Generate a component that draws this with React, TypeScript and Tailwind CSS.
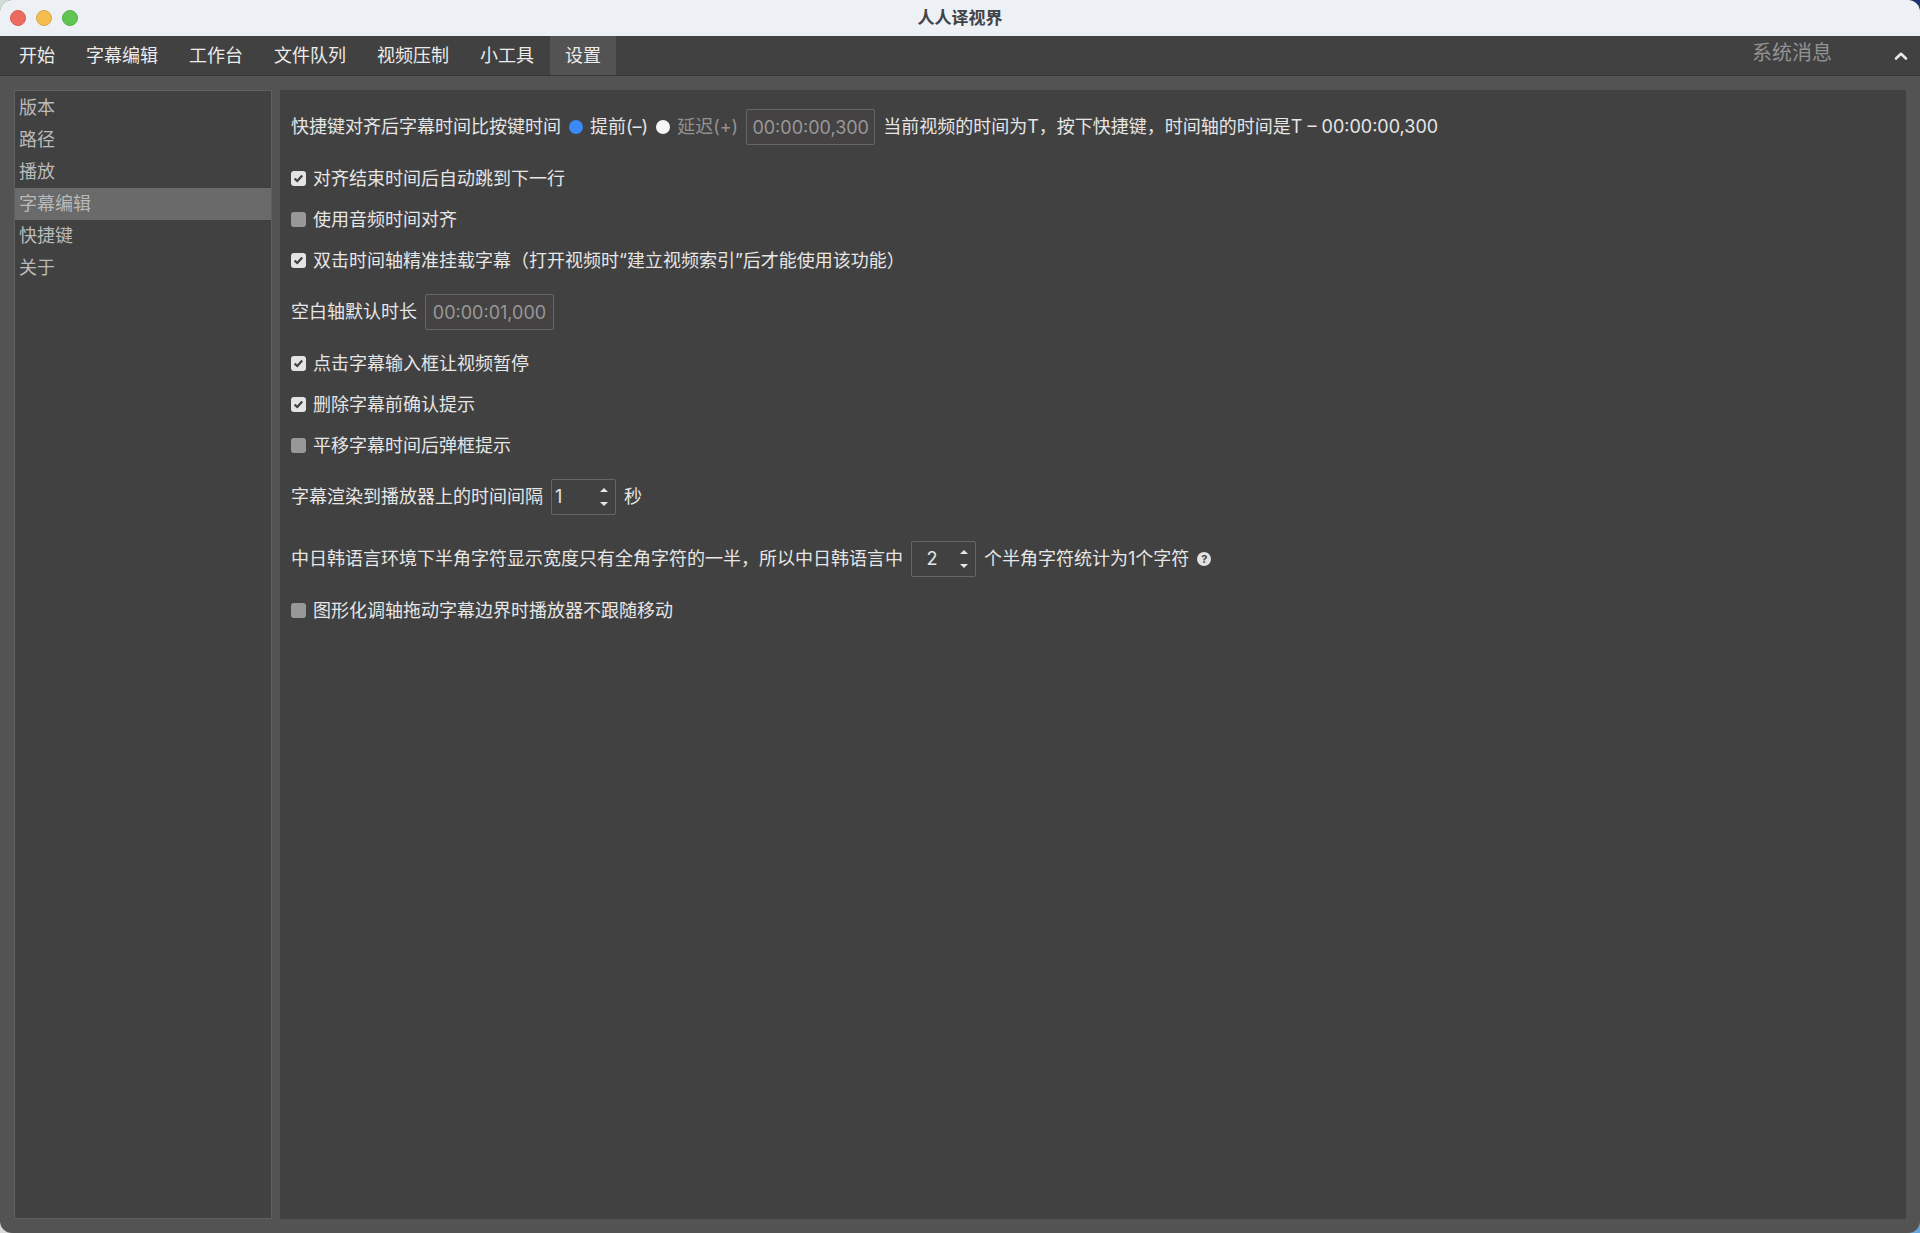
import { useState } from 'react'
import type { ReactNode } from 'react'

const TABS = ['开始', '字幕编辑', '工作台', '文件队列', '视频压制', '小工具', '设置']
const SECTIONS = ['版本', '路径', '播放', '字幕编辑', '快捷键', '关于']

function TitleBar() {
  return (
    <header className="relative flex h-9 flex-shrink-0 items-center justify-center bg-[#edf0f5]">
      <div className="absolute inset-y-0 left-[10px] flex items-center gap-[10px]">
        <button aria-label="关闭" className="size-4 rounded-full border border-[#d85a50] bg-[#ec6a5e]" />
        <button aria-label="最小化" className="size-4 rounded-full border border-[#dba743] bg-[#f4be4f]" />
        <button aria-label="缩放" className="size-4 rounded-full border border-[#50b143] bg-[#61c554]" />
      </div>
      <h1 className="text-[17px] leading-6 font-bold text-[#404347]">人人译视界</h1>
    </header>
  )
}

function MenuBar({ tab, onTab }: { tab: string; onTab: (t: string) => void }) {
  return (
    <nav className="flex h-10 flex-shrink-0 gap-px border-b border-[#363636] bg-[#414141] pr-3 pl-1">
      {TABS.map(t => (
        <button
          key={t}
          onClick={() => onTab(t)}
          className={`px-[15px] text-lg text-[#ececec] ${t === tab ? 'bg-[#535353]' : ''}`}
        >
          {t}
        </button>
      ))}
      <div className="ml-auto flex items-start gap-[62px]">
        <button className="pt-[3px] text-xl leading-7 text-[#929292]">系统消息</button>
        <button aria-label="收起" className="self-center text-[#e8e8e8]">
          <svg width="14" height="10" viewBox="0 0 14 10" fill="none" stroke="currentColor" strokeWidth="2.6" strokeLinecap="round" strokeLinejoin="round">
            <path d="M2 7.5 L7 2.8 L12 7.5" />
          </svg>
        </button>
      </div>
    </nav>
  )
}

function Check({ label, on = false }: { label: string; on?: boolean }) {
  return (
    <label className="flex h-[15px] items-center gap-[7px] leading-[15px]">
      <span className="grid place-items-center">
        <input
          type="checkbox"
          defaultChecked={on}
          className="peer col-start-1 row-start-1 size-[15px] appearance-none rounded-[3px] bg-[#989898] checked:bg-[#e4e4e4]"
        />
        <svg className="pointer-events-none invisible col-start-1 row-start-1 peer-checked:visible" width="11" height="11" viewBox="0 0 11 11" fill="none" stroke="#414141" strokeWidth="2.2">
          <path d="M1.6 5.6 L4.3 8 L9.2 2.6" />
        </svg>
      </span>
      <span>{label}</span>
    </label>
  )
}

function Radio({ children, on = false }: { children: ReactNode; on?: boolean }) {
  return (
    <label className="flex items-center gap-[7px] text-[#929292] has-checked:text-[#e6e6e6]">
      <input
        type="radio"
        name="align"
        defaultChecked={on}
        className="size-[14px] appearance-none rounded-full bg-[#f6f6f6] checked:bg-[#3b88f7]"
      />
      {children}
    </label>
  )
}

function TimeField({ label, value }: { label: string; value: string }) {
  return (
    <input
      aria-label={label}
      defaultValue={value}
      className="h-9 w-[129px] rounded-[2px] border border-[#666] bg-[#454243] text-center text-lg text-[#989898] outline-none"
    />
  )
}

function Spin({ label, start, centered = false }: { label: string; start: number; centered?: boolean }) {
  const [n, setN] = useState(start)
  return (
    <span className="flex h-9 w-[65px] rounded-[2px] border border-[#666]">
      <input
        aria-label={label}
        value={n}
        onChange={e => setN(Number(e.target.value) || 0)}
        className={`w-10 bg-transparent outline-none ${centered ? 'text-center' : 'pl-[3px]'}`}
      />
      <span className="flex flex-1 flex-col items-center justify-center gap-[10px] text-[#e8e8e8]">
        <button aria-label="增加" onClick={() => setN(n + 1)}>
          <svg className="block" width="8" height="4" viewBox="0 0 8 4" fill="currentColor"><path d="M4 0 L8 4 H0 Z" /></svg>
        </button>
        <button aria-label="减少" onClick={() => setN(n - 1)}>
          <svg className="block" width="8" height="4" viewBox="0 0 8 4" fill="currentColor"><path d="M4 4 L8 0 H0 Z" /></svg>
        </button>
      </span>
    </span>
  )
}

function Row({ children }: { children: ReactNode }) {
  return <div className="flex h-9 items-center gap-2 whitespace-nowrap">{children}</div>
}

export default function App() {
  const [tab, setTab] = useState('设置')
  const [section, setSection] = useState('字幕编辑')

  return (
    // the desktop shows through at the rounded window corners
    <div className="min-h-screen bg-[conic-gradient(#1c3374_0_25%,#6aa8dc_25%_50%,#dcdcdc_50%_75%,#cfdcd8_75%)] font-['Inter','Noto_Sans_CJK_SC',sans-serif]">
      <div className="flex min-h-screen flex-col overflow-hidden rounded-xl bg-[#535353]">
        <TitleBar />
        <MenuBar tab={tab} onTab={setTab} />
        <div className="flex flex-1 gap-2 p-[14px]">
          <aside className="w-[258px] flex-shrink-0 border border-[#5f5f5f] bg-[#414141] pt-px">
            {SECTIONS.map(s => (
              <button
                key={s}
                onClick={() => setSection(s)}
                className={`block h-8 w-full pl-1 text-left text-lg text-[#bababa] ${s === section ? 'bg-[#6a6a6a]' : ''}`}
              >
                {s}
              </button>
            ))}
          </aside>

          <main className="flex min-w-0 flex-1 flex-col items-start gap-[26px] bg-[#414141] px-[11px] pt-[19px] text-lg text-[#e6e6e6]">
            <Row>
              <span>快捷键对齐后字幕时间比按键时间</span>
              <Radio on>提前(–)</Radio>
              <Radio>延迟(+)</Radio>
              <TimeField label="时间偏移" value="00:00:00,300" />
              <span>当前视频的时间为T，按下快捷键，时间轴的时间是T – 00:00:00,300</span>
            </Row>
            <Check on label="对齐结束时间后自动跳到下一行" />
            <Check label="使用音频时间对齐" />
            <Check on label="双击时间轴精准挂载字幕（打开视频时“建立视频索引”后才能使用该功能）" />
            <Row>
              <span>空白轴默认时长</span>
              <TimeField label="空白轴默认时长" value="00:00:01,000" />
            </Row>
            <Check on label="点击字幕输入框让视频暂停" />
            <Check on label="删除字幕前确认提示" />
            <Check label="平移字幕时间后弹框提示" />
            <Row>
              <span>字幕渲染到播放器上的时间间隔</span>
              <Spin label="时间间隔" start={1} />
              <span>秒</span>
            </Row>
            <Row>
              <span>中日韩语言环境下半角字符显示宽度只有全角字符的一半，所以中日韩语言中</span>
              <Spin label="半角字符数" start={2} centered />
              <span>个半角字符统计为1个字符</span>
              <button aria-label="帮助" className="flex size-[14px] items-center justify-center rounded-full bg-[#e2e2e2] text-[11px] leading-none font-bold text-[#414141]">
                ?
              </button>
            </Row>
            <Check label="图形化调轴拖动字幕边界时播放器不跟随移动" />
          </main>
        </div>
      </div>
    </div>
  )
}
